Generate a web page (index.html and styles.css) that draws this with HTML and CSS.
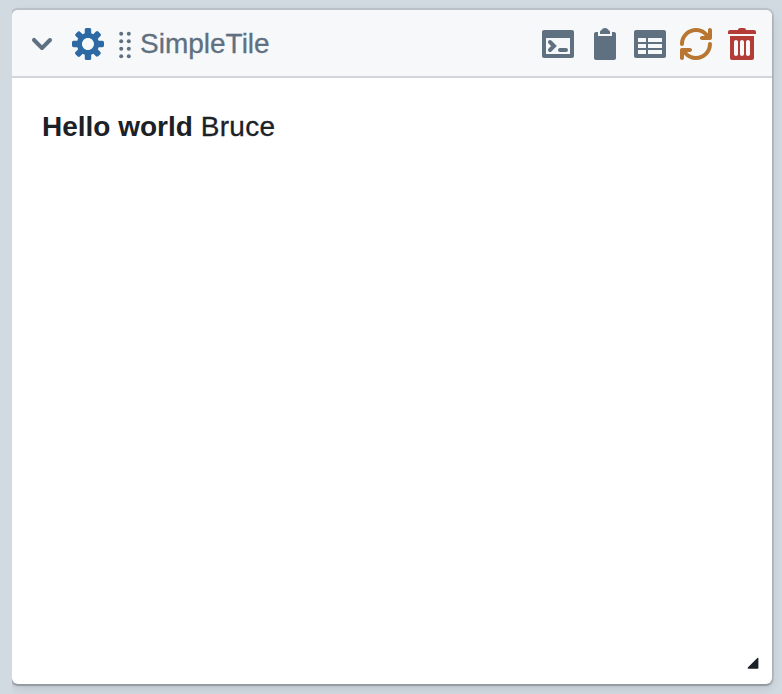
FILE: index.html
```html
<!DOCTYPE html>
<html lang="en">
<head>
<meta charset="utf-8">
<title>SimpleTile</title>
<link rel="stylesheet" href="styles.css">
</head>
<body>
<div class="workspace">
<section class="tile">
<header class="tile-header">
<svg class="icon shrink" viewBox="0 0 16 16"><path d="M12 5c-.28 0-.53.11-.71.29L8 8.59l-3.29-3.3a1.003 1.003 0 00-1.42 1.42l4 4c.18.18.43.29.71.29s.53-.11.71-.29l4-4A1.003 1.003 0 0012 5z"/></svg>
<svg class="icon gear" viewBox="0 0 16 16"><path fill-rule="evenodd" d="M15.19 6.39h-1.85c-.11-.37-.27-.71-.45-1.04l1.36-1.36c.31-.31.31-.82 0-1.13l-1.13-1.13a.803.803 0 00-1.13 0l-1.36 1.36c-.33-.17-.67-.33-1.04-.44V.79c0-.44-.36-.8-.8-.8h-1.6c-.44 0-.8.36-.8.8v1.86c-.39.12-.75.28-1.1.47l-1.3-1.3c-.3-.3-.79-.3-1.09 0L1.82 2.91c-.3.3-.3.79 0 1.09l1.3 1.3c-.2.34-.36.7-.48 1.09H.79c-.44 0-.8.36-.8.8v1.6c0 .44.36.8.8.8h1.85c.11.37.27.71.45 1.04l-1.36 1.36c-.31.31-.31.82 0 1.13l1.13 1.13c.31.31.82.31 1.13 0l1.36-1.36c.33.18.67.33 1.04.44v1.86c0 .44.36.8.8.8h1.6c.44 0 .8-.36.8-.8v-1.86c.39-.12.75-.28 1.1-.47l1.3 1.3c.3.3.79.3 1.09 0l1.09-1.09c.3-.3.3-.79 0-1.09l-1.3-1.3c.19-.35.36-.71.48-1.1h1.85c.44 0 .8-.36.8-.8v-1.6a.816.816 0 00-.81-.79zm-7.2 4.6c-1.66 0-3-1.34-3-3s1.34-3 3-3 3 1.34 3 3-1.34 3-3 3z"/></svg>
<svg class="grip" viewBox="0 0 12 32"><circle cx="2.2" cy="5.8" r="2"/><circle cx="9.8" cy="5.8" r="2"/><circle cx="2.2" cy="13.3" r="2"/><circle cx="9.8" cy="13.3" r="2"/><circle cx="2.2" cy="20.8" r="2"/><circle cx="9.8" cy="20.8" r="2"/><circle cx="2.2" cy="28.2" r="2"/><circle cx="9.8" cy="28.2" r="2"/></svg>
<span class="title">SimpleTile</span>
<div class="actions">
<svg class="icon" viewBox="0 0 16 16"><path fill-rule="evenodd" d="M15 1H1c-.55 0-1 .45-1 1v12c0 .55.45 1 1 1h14c.55 0 1-.45 1-1V2c0-.55-.45-1-1-1zm-1 12H2V5h12v8z"/><path class="stroke" d="M4 7l2 2-2 2M9 11h3"/></svg>
<svg class="icon" viewBox="0 0 16 16"><path d="M11 2c0-.55-.45-1-1-1h.22C9.88.4 9.24 0 8.5 0S7.12.4 6.78 1H7c-.55 0-1 .45-1 1v1h5V2zm2 0h-1v2H5V2H4c-.55 0-1 .45-1 1v12c0 .55.45 1 1 1h9c.55 0 1-.45 1-1V3c0-.55-.45-1-1-1z"/></svg>
<svg class="icon" viewBox="0 0 16 16"><path fill-rule="evenodd" d="M15 1H1c-.6 0-1 .5-1 1v12c0 .6.4 1 1 1h14c.6 0 1-.4 1-1V2c0-.5-.4-1-1-1zM6 13H2v-2h4v2zm0-3H2V8h4v2zm0-3H2V5h4v2zm8 6H7v-2h7v2zm0-3H7V8h7v2zm0-3H7V5h7v2z"/></svg>
<svg class="icon refresh" viewBox="0 0 16 16"><path d="M14.99 6.99c-.55 0-1 .45-1 1 0 3.31-2.69 6-6 6-1.77 0-3.36-.78-4.46-2h1.46c.55 0 1-.45 1-1s-.45-1-1-1h-4c-.55 0-1 .45-1 1v4c0 .55.45 1 1 1s1-.45 1-1v-1.74a7.95 7.95 0 006 2.74c4.42 0 8-3.58 8-8 0-.55-.45-1-1-1zm0-7c-.55 0-1 .45-1 1v1.74a7.95 7.95 0 00-6-2.74c-4.42 0-8 3.58-8 8 0 .55.45 1 1 1s1-.45 1-1c0-3.31 2.69-6 6-6 1.77 0 3.36.78 4.46 2h-1.46c-.55 0-1 .45-1 1s.45 1 1 1h4c.55 0 1-.45 1-1v-4c0-.55-.45-1-1-1z"/></svg>
<svg class="icon trash" viewBox="0 0 16 16"><path d="M14 1h-4c0-.55-.45-1-1-1H7c-.55 0-1 .45-1 1H2c-.55 0-1 .45-1 1v1h14V2c0-.55-.45-1-1-1z"/><path fill-rule="evenodd" d="M14 4H2v11c0 .55.45 1 1 1h10c.55 0 1-.45 1-1V4zM6 13c0 .55-.45 1-1 1s-1-.45-1-1V7c0-.55.45-1 1-1s1 .45 1 1v6zm3 0c0 .55-.45 1-1 1s-1-.45-1-1V7c0-.55.45-1 1-1s1 .45 1 1v6zm3 0c0 .55-.45 1-1 1s-1-.45-1-1V7c0-.55.45-1 1-1s1 .45 1 1v6z"/></svg>
</div>
</header>
<main class="content"><strong>Hello world</strong> <span class="name">Bruce</span></main>
<svg class="resize" viewBox="0 0 12 12"><path d="M.8 10.6L10.6.8q.7-.4.8.4v9.9q0 .6-.6.6H1.2q-.9-.3-.4-1.1z"/></svg>
</section>
</div>
</body>
</html>
```
FILE: styles.css
```css
* { box-sizing: border-box; }
body {
  margin: 0;
  height: 694px;
  padding-left: 12px;
  background: #d1d9e1;
  font-family: "Liberation Sans", Arial, sans-serif;
  overflow: hidden;
}
.workspace {
  height: 694px;
  padding: 10px 10px 10px 0;
  overflow: hidden;
}
.tile {
  display: flex;
  flex-direction: column;
  height: 674px;
  border-radius: 6px;
  background: #fff;
  box-shadow: 0 0 0 2px rgba(17, 20, 24, .1), 0 2px 2px rgba(17, 20, 24, .2), 0 4px 12px rgba(17, 20, 24, .1);
  color: #1c2127;
}
.tile-header {
  display: flex;
  align-items: center;
  height: 68px;
  padding: 2px 14px 0;
  border-bottom: 2px solid #d2d6da;
  border-radius: 6px 6px 0 0;
  background: #f6f8fa;
}
.icon {
  display: block;
  flex: none;
  width: 32px;
  height: 32px;
  fill: currentColor;
  color: #5f7080;
}
.stroke {
  fill: none;
  stroke: currentColor;
  stroke-width: 2;
  stroke-linecap: round;
}
.gear { margin-left: 14px; color: #2d6aa3; }
.grip { width: 12px; height: 32px; margin: 0 9px 0 15px; fill: #5f7080; }
.title {
  color: #5f7080;
  font-size: 28px;
  line-height: 36px;
  -webkit-text-stroke: .3px currentColor;
}
.actions { display: flex; gap: 14px; margin-left: auto; }
.refresh { color: #b87631; }
.trash { color: #b33c37; }
.content {
  flex: 1;
  padding: 31px 30px 30px;
  font-size: 28px;
  line-height: 36px;
}
.name {
  letter-spacing: .3px;
  -webkit-text-stroke: .3px currentColor;
}
.resize {
  align-self: flex-end;
  width: 12px;
  height: 12px;
  margin: 0 13px 15px 0;
  fill: #1c2127;
}
```
